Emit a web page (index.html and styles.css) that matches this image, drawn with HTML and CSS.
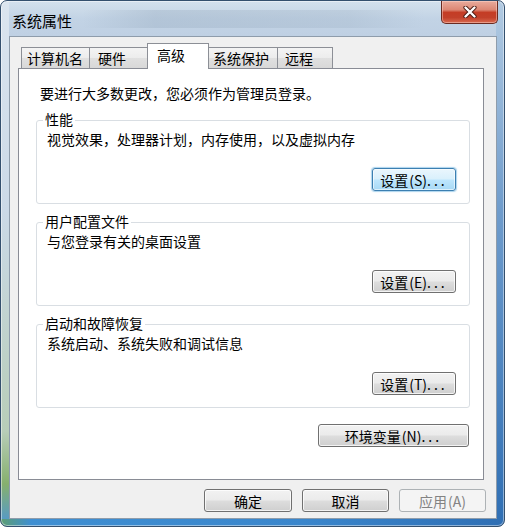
FILE: index.html
```html
<!DOCTYPE html>
<html lang="zh-CN">
<head>
<meta charset="utf-8">
<title>系统属性</title>
<link rel="stylesheet" href="styles.css">
</head>
<body>
<div class="window">
  <div class="titlebar">
    <span class="title">系统属性</span>
    <div class="close">
      <svg width="14" height="12" viewBox="0 0 14 12">
        <path d="M2.5 1.5 L11.5 10.5 M11.5 1.5 L2.5 10.5" stroke="#4a1a12" stroke-width="4.2" stroke-linecap="round" fill="none"/>
        <path d="M2.5 1.5 L11.5 10.5 M11.5 1.5 L2.5 10.5" stroke="#ffffff" stroke-width="2.4" stroke-linecap="round" fill="none"/>
      </svg>
    </div>
  </div>
  <div class="client">
    <div class="tabs">
      <div class="tab t1">计算机名</div>
      <div class="tab t2">硬件</div>
      <div class="tab t3 active">高级</div>
      <div class="tab t4">系统保护</div>
      <div class="tab t5">远程</div>
    </div>
    <div class="panel">
      <p class="note">要进行大多数更改，您必须作为管理员登录。</p>
      <div class="group">
        <span class="legend">性能</span>
        <p class="desc">视觉效果，处理器计划，内存使用，以及虚拟内存</p>
        <div class="row"><button class="btn set hot">设置<span class="key">(S)</span><span class="dots">...</span></button></div>
      </div>
      <div class="group">
        <span class="legend">用户配置文件</span>
        <p class="desc">与您登录有关的桌面设置</p>
        <div class="row"><button class="btn set">设置<span class="key">(E)</span><span class="dots">...</span></button></div>
      </div>
      <div class="group">
        <span class="legend">启动和故障恢复</span>
        <p class="desc">系统启动、系统失败和调试信息</p>
        <div class="row"><button class="btn set">设置<span class="key">(T)</span><span class="dots">...</span></button></div>
      </div>
      <div class="row env"><button class="btn envbtn">环境变量<span class="key">(N)</span><span class="dots">...</span></button></div>
    </div>
    <div class="footer">
      <button class="btn dlg ok">确定</button>
      <button class="btn dlg">取消</button>
      <button class="btn dlg disabled">应用<span class="key">(A)</span></button>
    </div>
  </div>
</div>
</body>
</html>
```
FILE: styles.css
```css
html, body {
  margin: 0;
  padding: 0;
  background: #ffffff;
}
body {
  font-family: "Noto Sans CJK SC", "Noto Sans", sans-serif;
  font-size: 14px;
  color: #000;
}
.window {
  box-sizing: border-box;
  width: 505px;
  height: 527px;
  border: 1px solid #34506e;
  border-radius: 7px;
  padding: 0 7px 0 8px;
  background:
    linear-gradient(to bottom, #b3cbe2, #6f9ccc 40%, #2f6fb4) right top / 8px 100% no-repeat,
    linear-gradient(to right, #5c9d73, #3f8fd2 6%, #3a86cc 60%, #2f6fb4) left bottom / 100% 7px no-repeat,
    linear-gradient(to bottom, #dbe5ef 0%, #cbd9e7 40%, #b7cdb8 82%, #86b06e 92%, #4f97d4 100%) left top / 8px 100% no-repeat,
    linear-gradient(to bottom, #d4e1ed 0, #c2d3e5 18px, #bfd0e3 35px, #c9d7e6 100%);
  box-shadow: inset 0 0 0 1px rgba(255, 255, 255, 0.45);
}
.titlebar {
  display: flex;
  align-items: flex-start;
  height: 35px;
  padding-left: 3px;
  background: linear-gradient(to right, rgba(255,255,255,0) 15%, rgba(150,170,190,0.35) 30%, rgba(150,170,190,0.25) 70%, rgba(255,255,255,0) 85%) 0 9px / 100% 18px no-repeat;
}
.title {
  font-size: 15px;
  line-height: 18px;
  margin-top: 11px;
  color: #000;
}
.close {
  margin-left: auto;
  margin-right: -1px;
  width: 57px;
  height: 23px;
  box-sizing: border-box;
  border: 1px solid #6a2a20;
  border-top: none;
  border-radius: 0 0 5px 5px;
  background: linear-gradient(to bottom, #e9ab9c 0%, #dc8774 40%, #c43c25 52%, #c2402a 75%, #d9694f 100%);
  box-shadow: inset 0 0 0 1px rgba(255, 220, 210, 0.45);
  display: flex;
  align-items: center;
  justify-content: center;
}
.client {
  box-sizing: border-box;
  height: 483px;
  border: 1px solid #8e9cab;
  background: #f0f0f0;
}
.tabs {
  display: flex;
  align-items: flex-end;
  height: 25px;
  margin: 6px 0 0 11px;
  position: relative;
  z-index: 1;
}
.tab {
  box-sizing: border-box;
  height: 21px;
  margin-right: -1px;
  border: 1px solid #8c8f96;
  border-bottom: none;
  padding: 1px 0 0 6px;
  line-height: 18px;
  background: linear-gradient(to bottom, #f4f4f4 0%, #ececec 50%, #e0e0e0 51%, #d8d8d8 100%);
  white-space: nowrap;
}
.tab.active {
  height: 26px;
  margin-bottom: -1px;
  padding-top: 2px;
  background: #ffffff;
}
.t1 { width: 69px; padding-left: 5px; }
.t2 { width: 59px; padding-left: 8px; }
.t3 { width: 62px; padding-left: 9px; }
.t4 { width: 70px; padding-left: 4px; }
.t5 { width: 56px; padding-left: 7px; }
.panel {
  box-sizing: border-box;
  width: 466px;
  height: 412px;
  margin-left: 8px;
  border: 1px solid #898c95;
  background: #ffffff;
  padding: 15px 13px 0 17px;
}
.note {
  margin: 0;
  padding-left: 4px;
  line-height: 18px;
}
.group {
  position: relative;
  margin-top: 18px;
  border: 1px solid #d9dee3;
  border-radius: 3px;
  padding: 9px 13px 12px 10px;
}
.legend {
  position: absolute;
  top: -11px;
  left: 6px;
  padding: 0 2px;
  background: #ffffff;
  line-height: 18px;
}
.desc {
  margin: 0;
  line-height: 18px;
}
.row {
  display: flex;
  justify-content: flex-end;
  margin-top: 20px;
}
.row.env {
  margin-top: 16px;
  padding-right: 1px;
}
.btn {
  box-sizing: border-box;
  height: 23px;
  padding: 0;
  border: 1px solid #707070;
  border-radius: 3px;
  background: linear-gradient(to bottom, #f2f2f2 0%, #ebebeb 48%, #dddddd 52%, #cfcfcf 100%);
  box-shadow: inset 0 0 0 1px rgba(255, 255, 255, 0.75);
  font-family: "Noto Sans CJK SC", "Noto Sans", sans-serif;
  font-size: 14px;
  line-height: 20px;
  color: #000;
  text-align: center;
  white-space: nowrap;
}
.btn .key {
  margin-left: 1px;
}
.btn .dots {
  letter-spacing: 3px;
}
.btn.set {
  width: 84px;
}
.btn.hot {
  border-color: #3c7fb1;
  background: linear-gradient(to bottom, #eaf6fd 0%, #d9f0fc 48%, #bee6fd 52%, #a7d9f5 100%);
  box-shadow: inset 0 0 0 1px rgba(255, 255, 255, 0.6), 0 0 1px 1px rgba(90, 170, 220, 0.5);
}
.btn.envbtn {
  width: 151px;
}
.footer {
  display: flex;
  justify-content: flex-end;
  gap: 10px;
  margin-top: 9px;
  padding-right: 10px;
}
.btn.dlg {
  width: 87px;
}
.btn.ok {
  width: 88px;
}
.btn.disabled {
  border-color: #adb2b5;
  background: #f4f4f4;
  box-shadow: none;
  color: #838383;
}
```
